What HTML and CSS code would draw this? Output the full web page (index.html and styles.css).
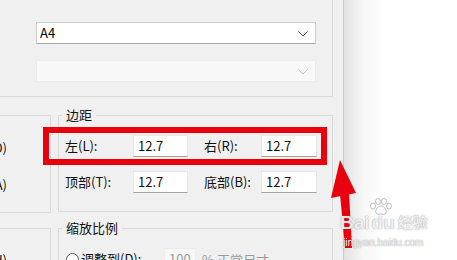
FILE: index.html
```html
<!DOCTYPE html>
<html lang="zh-CN">
<head>
<meta charset="utf-8">
<title>页面设置</title>
<link rel="stylesheet" href="styles.css">
</head>
<body>
<div class="screen">
  <div class="dialog">
    <div class="paper">
      <div class="combo"><span class="combo-text">A4</span><svg class="chev" width="10" height="6" viewBox="0 0 10 6"><path d="M0.5 0.5 L5 5 L9.5 0.5" fill="none" stroke="#4a4a4a" stroke-width="1"/></svg></div>
      <div class="combo disabled"><span class="combo-text"></span><svg class="chev" width="10" height="6" viewBox="0 0 10 6"><path d="M0.5 0.5 L5 5 L9.5 0.5" fill="none" stroke="#c4c4c4" stroke-width="1"/></svg></div>
    </div>
    <div class="lower">
      <div class="left-col">
        <div class="lgroup lg1">
          <div class="lrow r1"><span>纵向(O)</span></div>
          <div class="lrow r2"><span>横向(A)</span></div>
        </div>
        <div class="lgroup lg2">
          <div class="lrow r3"><span>页面(H)</span></div>
        </div>
      </div>
      <div class="right-col">
        <div class="group margins">
          <div class="group-title">边距</div>
          <div class="mgrid">
            <span class="lbl">左(L):</span><div class="tbox">12.7</div><span></span><span class="lbl">右(R):</span><div class="tbox">12.7</div>
            <span class="lbl">顶部(T):</span><div class="tbox">12.7</div><span></span><span class="lbl">底部(B):</span><div class="tbox">12.7</div>
          </div>
        </div>
        <div class="group scale">
          <div class="group-title">缩放比例</div>
          <div class="srow">
            <span class="radio"></span>
            <span class="lbl adj">调整到(D):</span>
            <div class="tbox dis">100</div>
            <span class="dim">% 正常尺寸</span>
          </div>
        </div>
      </div>
    </div>
  </div>
  <div class="shade"></div>

  <div class="mark-box"></div>
  <svg class="arrow" width="457" height="260" viewBox="0 0 457 260">
    <polygon points="340,160 331,198 356,193" fill="#e8000f"/>
    <polygon points="340,194 349,193 352,248 345,248" fill="#e8000f"/>
  </svg>
  <div class="watermark">
    <div class="wm-top">
      <span>Bai</span>
      <span class="du">du<svg class="paw" width="24" height="18" viewBox="0 0 24 18"><g fill="rgba(255,255,255,0.8)" stroke="rgba(130,130,130,0.5)" stroke-width="1"><ellipse cx="4" cy="8" rx="2.5" ry="3"/><ellipse cx="9" cy="3.5" rx="2.5" ry="3"/><ellipse cx="15" cy="3.5" rx="2.5" ry="3"/><ellipse cx="20" cy="8" rx="2.5" ry="3"/><path d="M12 8 C8 8 6 13 7 15 C8 17 11 16 12 16 C13 16 16 17 17 15 C18 13 16 8 12 8 Z"/></g></svg></span>
      <span class="wm-cn">经验</span>
    </div>
    <div class="wm-url">jingyan.baidu.com</div>
  </div>
</div>
</body>
</html>
```

FILE: styles.css
```css
* { box-sizing: border-box; }
html, body { margin: 0; padding: 0; background: #fff; }
body {
  width: 457px; height: 260px; overflow: hidden;
  font-family: "Noto Sans CJK SC", "Noto Sans", sans-serif;
  font-size: 13px; color: #111;
}
.screen { position: relative; width: 457px; height: 260px; display: flex; overflow: hidden; }
.dialog {
  width: 344px; height: 260px; background: #f0f0f0;
  border-right: 1px solid #cacaca; flex: none;
}
.shade {
  width: 40px; height: 260px; flex: none;
  background: linear-gradient(to right, #e2e2e2, #f6f6f6 45%, #ffffff);
}

/* paper group */
.paper {
  width: 333px; height: 97px;
  border-right: 1px solid #d9d9d9; border-bottom: 1px solid #d9d9d9;
  padding: 22px 0 0 36px;
  display: flex; flex-direction: column; gap: 16px;
}
.combo {
  width: 280px; height: 22px; background: #fff;
  border: 1px solid #cdcdcd; border-bottom-color: #a8a8a8;
  display: flex; align-items: center; justify-content: space-between;
  padding: 0 7px 0 3px;
}
.combo.disabled { background: #f8f8f8; border-color: #ececec; }
.combo-text { line-height: 20px; font-size: 13px; color: #000; }
.chev { display: block; margin-top: 1px; }

/* lower area */
.lower { display: flex; margin-top: 18px; }
.left-col { width: 51px; flex: none; }
.lgroup { border-top: 1px solid #d9d9d9; border-right: 1px solid #d9d9d9; }
.lg1 { height: 98px; border-bottom: 1px solid #d9d9d9; padding-top: 21px; }
.lg2 { margin-top: 15px; height: 40px; padding-top: 20px; }
.lrow {
  width: 7px; height: 22px; display: flex; justify-content: flex-end;
  align-items: center; white-space: nowrap; line-height: 22px;
}
.lrow.r2 { margin-top: 15px; }

.right-col { margin-left: 7px; width: 275px; flex: none; }
.group { border: 1px solid #d9d9d9; }
.group-title {
  display: block; width: fit-content; height: 18px; line-height: 18px;
  margin: -10px 0 0 3px; padding: 0 4px; background: #f0f0f0;
  color: #111;
}
.margins { height: 97px; }
.mgrid {
  display: grid;
  grid-template-columns: 68px 55px 16px 57px 56px;
  grid-auto-rows: 22px; row-gap: 14px;
  margin: 11px 0 0 6px;
}
.lbl { line-height: 22px; white-space: nowrap; color: #111; }
.tbox {
  height: 22px; background: #fff;
  border: 1px solid #e8e8e8; border-bottom-color: #a2a2a2;
  padding: 0 4px; line-height: 19px; color: #111; font-size: 13px;
}
.scale { margin-top: 16px; height: 60px; border-bottom: none; }
.srow { display: flex; align-items: center; margin: 11px 0 0 7px; height: 22px; }
.radio {
  width: 13px; height: 13px; border-radius: 50%;
  border: 1px solid #5a5a5a; background: #fff; flex: none;
}
.adj { margin-left: 2px; width: 83px; }
.tbox.dis { width: 32px; background: #f7f7f7; border-color: #ececec; color: #9a9a9a; }
.dim { margin-left: 6px; color: #9a9a9a; }

/* annotation overlays */
.mark-box {
  position: absolute; left: 43px; top: 127px; width: 284px; height: 38px;
  border: 6px solid #e8000f;
}
.arrow { position: absolute; left: 0; top: 0; }
.watermark {
  position: absolute; left: 340px; top: 212px;
  color: rgba(255,255,255,0.85);
  text-shadow: 0 0 1px rgba(120,120,120,0.55), 0 0 1px rgba(120,120,120,0.55);
  font-family: "Liberation Sans", "Noto Sans CJK SC", sans-serif;
}
.wm-top { display: flex; align-items: flex-end; font-size: 19px; font-weight: bold; line-height: 22px; height: 22px; }
.du { position: relative; margin-left: 2px; }
.paw { position: absolute; left: -3px; top: -14px; }
.wm-cn { margin-left: 3px; font-size: 15px; }
.wm-url { font-size: 10px; line-height: 13px; margin-left: 3px; margin-top: 2px; }
```
